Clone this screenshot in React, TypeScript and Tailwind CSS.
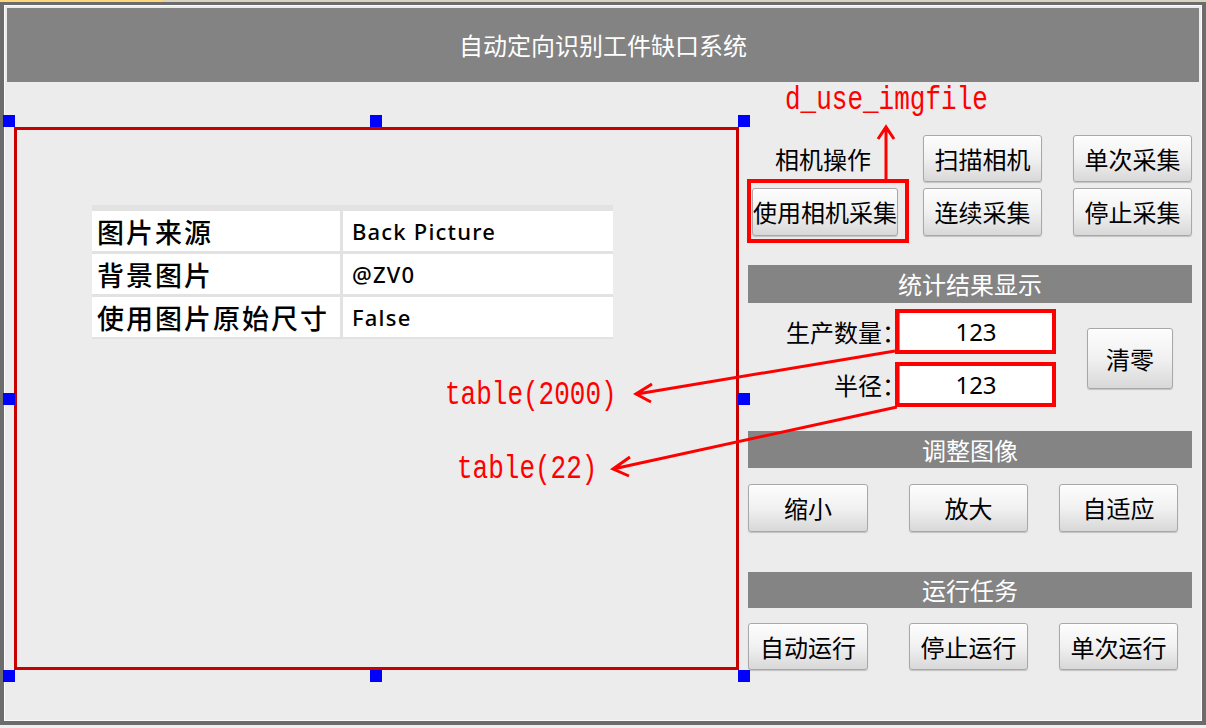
import clsx from 'clsx';

const HANDLE = 'absolute h-[12px] w-[12px] bg-[#0000ff]';

function Btn({ label, className }: { label: string; className?: string }) {
  return (
    <button
      className={clsx(
        'flex items-center justify-center whitespace-nowrap rounded-[3px] border border-[#a8a8a8] bg-linear-to-b from-[#fdfdfd] via-[#f1f1f1] to-[#d8d8d8] px-0 text-[24px] leading-none text-black shadow-[inset_0_1px_0_#ffffff,0_1px_1px_rgba(0,0,0,0.18)]',
        className
      )}
    >
      {label}
    </button>
  );
}

function SectionBar({ title, className }: { title: string; className?: string }) {
  return (
    <div className={clsx('flex items-center justify-center bg-[#848484] text-[24px] leading-none text-white', className)}>
      {title}
    </div>
  );
}

function CountField({ label, value }: { label: string; value: string }) {
  return (
    <div className="flex items-center">
      <div className="flex w-[147px] justify-end text-[24px] leading-none text-black">
        <span>{label}</span>
        <span className="-mr-[11px] w-[24px]">：</span>
      </div>
      <div className="border-4 border-[#ff0000]">
        <div className="flex h-[37px] w-[153px] items-center justify-center border-l border-[#9c9c9c] bg-white font-['Noto_Sans',sans-serif] text-[24px] leading-none text-black">
          {value}
        </div>
      </div>
    </div>
  );
}

function Callout({ text, className }: { text: string; className?: string }) {
  return (
    <div
      className={clsx(
        "pointer-events-none absolute origin-top scale-y-[1.28] whitespace-nowrap font-['Liberation_Mono',monospace] text-[26px] leading-[26px] text-[#ff0000]",
        className
      )}
    >
      {text}
    </div>
  );
}

const props = [
  { key: '图片来源', value: 'Back Picture' },
  { key: '背景图片', value: '@ZV0' },
  { key: '使用图片原始尺寸', value: 'False' },
];

function PropertyGrid() {
  return (
    <div className="ml-[75px] mt-[75px] flex w-[521px] flex-col gap-[3px] bg-[#e2e2e2] pb-[2px] pt-[6px]">
      {props.map((p) => (
        <div key={p.key} className="flex h-[40px] gap-[3px]">
          <div className="flex w-[248px] items-center bg-white pl-[5px] text-[27px] font-medium leading-none tracking-[2px] text-black">
            {p.key}
          </div>
          <div className="flex flex-1 items-center bg-white pl-[9px] font-['Noto_Sans',sans-serif] text-[22px] font-medium leading-none tracking-[1.2px] text-black">
            {p.value}
          </div>
        </div>
      ))}
    </div>
  );
}

export default function App() {
  return (
    <div className="relative h-[728px] w-[1206px] overflow-hidden bg-[#f0f0f0] font-['Noto_Sans_CJK_SC','Noto_Sans',sans-serif]">
      {/* taskbar strip */}
      <div className="flex h-[2px]">
        <div className="w-[163px] bg-[#ffd678]" />
        <div className="flex-1 bg-[#d9d4c2]" />
      </div>

      <div className="h-[723px] border-x-[4px] border-b-[4px] border-t-[3px] border-[#6c6c6c]">
        <div className="flex h-full flex-col border border-[#fbfbfb] bg-[#ececec]">
          <div className="mx-[2px] mt-[2px] flex h-[74px] items-center justify-center bg-[#838383] text-[24px] leading-none text-white">
            自动定向识别工件缺口系统
          </div>

          <div className="flex flex-1">
            {/* image view */}
            <div className="pl-[9px] pt-[45px]">
              <div className="relative h-[543px] w-[725px] border-[3px] border-[#c80000]">
                <div className={clsx(HANDLE, '-left-[14px] -top-[15px]')} />
                <div className={clsx(HANDLE, '-top-[15px] left-[353px]')} />
                <div className={clsx(HANDLE, '-top-[15px] left-[721px]')} />
                <div className={clsx(HANDLE, '-left-[14px] top-[263px]')} />
                <div className={clsx(HANDLE, 'left-[721px] top-[263px]')} />
                <div className={clsx(HANDLE, '-left-[14px] top-[540px]')} />
                <div className={clsx(HANDLE, 'left-[353px] top-[540px]')} />
                <div className={clsx(HANDLE, 'left-[721px] top-[540px]')} />
                <PropertyGrid />
              </div>
            </div>

            {/* control panel */}
            <div className="ml-[9px] flex w-[444px] flex-col pt-[53px] text-black">
              <div className="flex h-[47px] items-center">
                <div className="flex w-[150px] justify-center text-[24px] leading-none">相机操作</div>
                <Btn label="扫描相机" className="ml-[25px] h-[47px] w-[119px]" />
                <Btn label="单次采集" className="ml-[31px] h-[47px] w-[119px]" />
              </div>
              <div className="mt-[6px] flex h-[48px]">
                <div className="relative ml-[4px] w-[146px]">
                  <Btn label="使用相机采集" className="h-full w-full" />
                  <div className="pointer-events-none absolute -bottom-[7px] -left-[5px] -right-[11px] -top-[9px] border-4 border-[#ff0000]" />
                </div>
                <Btn label="连续采集" className="ml-[25px] h-full w-[119px]" />
                <Btn label="停止采集" className="ml-[31px] h-full w-[119px]" />
              </div>

              <SectionBar title="统计结果显示" className="mt-[29px] h-[38px]" />
              <div className="mt-[6px] flex">
                <div className="flex flex-col gap-[8px]">
                  <CountField label="生产数量" value="123" />
                  <CountField label="半径" value="123" />
                </div>
                <Btn label="清零" className="ml-[31px] mt-[19px] h-[61px] w-[86px]" />
              </div>

              <SectionBar title="调整图像" className="mt-[24px] h-[37px]" />
              <div className="mt-[16px] flex h-[48px]">
                <Btn label="缩小" className="h-full w-[120px]" />
                <Btn label="放大" className="ml-[41px] h-full w-[119px]" />
                <Btn label="自适应" className="ml-[31px] h-full w-[119px]" />
              </div>

              <SectionBar title="运行任务" className="mt-[40px] h-[36px]" />
              <div className="mt-[15px] flex h-[47px]">
                <Btn label="自动运行" className="h-full w-[120px]" />
                <Btn label="停止运行" className="ml-[41px] h-full w-[119px]" />
                <Btn label="单次运行" className="ml-[31px] h-full w-[119px]" />
              </div>
            </div>
          </div>
        </div>
      </div>

      {/* red callouts */}
      <svg className="pointer-events-none absolute inset-0" width="1206" height="728" fill="none" stroke="#ff0000" strokeWidth="3">
        <path d="M886 179 L886 128 M878 139 L886 127 L894 139" />
        <path d="M895 351 L637 394 M652 384 L636 394 L651 402" />
        <path d="M897 407 L613 469 M630 457 L613 469 L629 476" />
      </svg>
      <Callout text="d_use_imgfile" className="left-[785px] top-[83px]" />
      <Callout text="table(2000)" className="left-[445px] top-[378px]" />
      <Callout text="table(22)" className="left-[457px] top-[452px]" />
    </div>
  );
}
